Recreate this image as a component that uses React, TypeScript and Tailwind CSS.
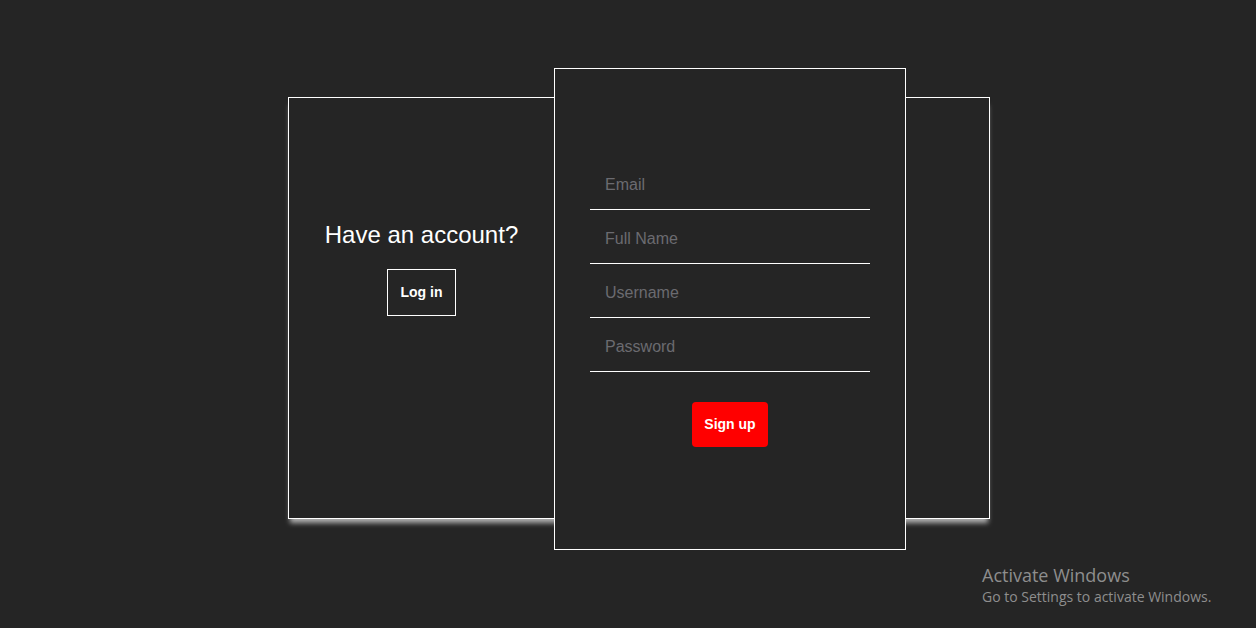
export default function App() {
  const fields = ["Email", "Full Name", "Username", "Password"];
  return (
    <div className="relative w-[1256px] h-[628px] bg-[#252525] overflow-hidden" style={{ fontFamily: '"Liberation Sans", Arial, sans-serif' }}>
      <div className="absolute left-[288px] top-[97px] w-[702px] h-[422px] border border-white shadow-[0_6px_5px_-2px_#b0b0b0] flex">
        <div className="w-[265px] flex flex-col items-center pt-[123px]">
          <div className="text-white text-[24px] leading-[28px]">Have an account?</div>
          <button className="mt-[20px] w-[69px] h-[47px] border border-white text-white text-[14px] font-bold">Log in</button>
        </div>
      </div>
      <div className="absolute left-[554px] top-[68px] w-[352px] h-[482px] border border-white bg-[#252525] px-[35px] pt-[87px] flex flex-col">
        {fields.map((f) => (
          <div key={f} className="h-[54px] border-b border-white flex items-center pl-[15px] pt-[4px] text-[16px] text-[#6b6b70]">{f}</div>
        ))}
        <div className="flex justify-center mt-[30px]">
          <button className="w-[76px] h-[45px] bg-[#ff0000] rounded-[4px] text-white text-[14px] font-bold">Sign up</button>
        </div>
      </div>
      <div className="absolute left-[982px] top-[564px] text-[#8e8e8e]">
        <div className="text-[18px] leading-[22px]" style={{ fontFamily: '"Open Sans", sans-serif' }}>Activate Windows</div>
        <div className="text-[14px] leading-[20px] mt-[1px]" style={{ fontFamily: '"Open Sans", sans-serif' }}>Go to Settings to activate Windows.</div>
      </div>
    </div>
  );
}
